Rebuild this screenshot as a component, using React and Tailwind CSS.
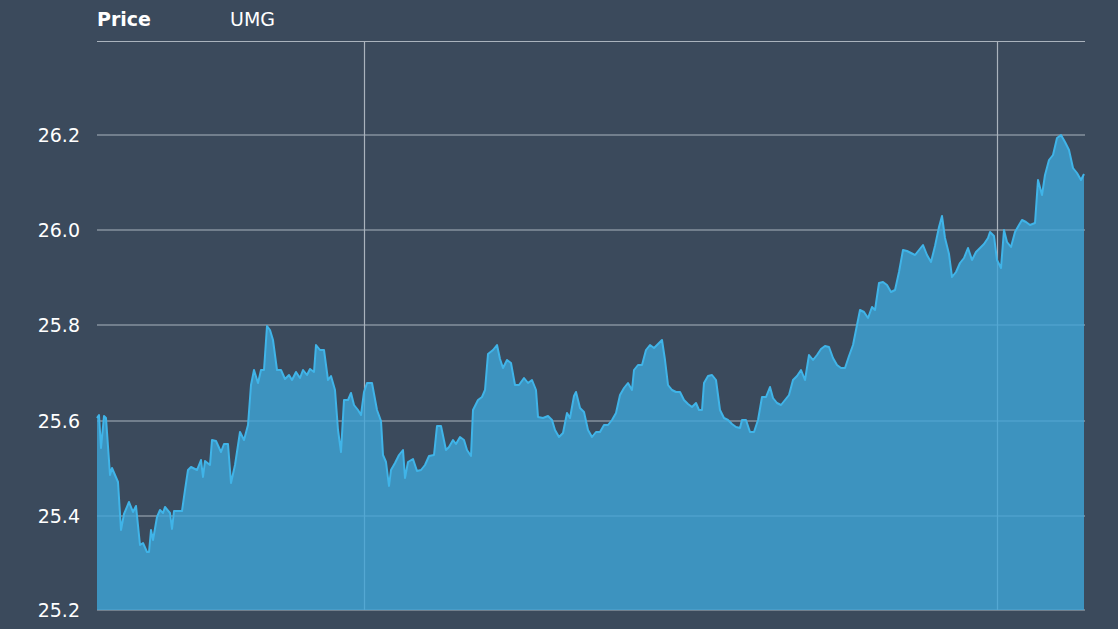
const pts = [[97,418],[99,415],[101,448],[104,416],[106,418],[110,475],[112,468],[118,482],[121,530],[124,514],[129,502],[133,512],[136,506],[140,545],[143,543],[147,552],[149,552],[151,530],[153,540],[157,517],[160,510],[163,513],[165,507],[170,513],[172,529],[174,511],[182,511],[185,490],[188,470],[191,467],[197,470],[201,460],[203,477],[205,461],[210,465],[212,440],[216,441],[221,452],[224,444],[228,444],[231,483],[235,465],[240,432],[244,440],[248,425],[251,385],[254,370],[258,383],[261,370],[264,370],[267,326],[270,330],[273,340],[277,370],[281,370],[285,379],[289,375],[292,380],[296,372],[300,378],[303,370],[307,375],[310,369],[314,372],[316,345],[320,350],[324,350],[328,380],[331,376],[335,390],[338,430],[341,452],[344,400],[348,400],[351,393],[354,405],[358,410],[361,415],[364,392],[367,383],[372,383],[377,410],[381,421],[383,455],[386,462],[389,486],[391,470],[395,463],[399,455],[403,450],[405,478],[408,462],[413,459],[417,471],[421,470],[425,465],[429,456],[434,455],[437,426],[441,426],[446,450],[449,447],[453,440],[456,444],[460,437],[464,440],[467,450],[471,456],[473,410],[478,400],[482,397],[485,390],[488,354],[493,350],[497,345],[500,359],[503,368],[507,360],[511,363],[515,385],[519,385],[524,378],[528,383],[532,380],[536,390],[538,417],[543,418],[548,416],[552,420],[555,430],[559,437],[563,433],[567,413],[570,418],[574,396],[576,392],[580,408],[584,412],[588,430],[592,437],[596,432],[600,432],[604,425],[608,425],[612,420],[616,413],[620,395],[624,388],[628,383],[632,390],[634,370],[638,365],[642,365],[646,350],[650,345],[654,348],[658,344],[662,340],[665,360],[668,385],[672,390],[676,392],[680,392],[684,400],[688,404],[692,407],[696,403],[699,410],[702,410],[704,383],[708,376],[712,375],[716,380],[720,410],[724,418],[728,420],[732,424],[736,427],[740,428],[742,420],[746,420],[750,432],[754,432],[758,420],[762,397],[766,397],[770,387],[773,398],[777,403],[781,405],[785,400],[789,395],[793,380],[797,376],[801,370],[805,380],[809,355],[813,360],[817,355],[821,349],[825,346],[829,347],[833,358],[837,365],[841,368],[845,368],[849,356],[853,345],[857,325],[860,310],[864,312],[868,318],[872,307],[875,310],[879,283],[883,282],[887,285],[891,292],[895,290],[899,272],[903,250],[907,251],[911,253],[915,255],[919,250],[923,245],[927,255],[931,262],[935,246],[939,227],[942,216],[945,238],[949,254],[952,277],[956,272],[960,263],[964,258],[968,248],[972,260],[976,252],[980,248],[984,244],[988,238],[990,232],[994,236],[997,260],[1001,268],[1004,230],[1007,242],[1011,247],[1015,232],[1019,225],[1022,220],[1026,222],[1030,225],[1035,223],[1038,180],[1042,195],[1045,175],[1049,160],[1053,155],[1057,138],[1061,135],[1065,142],[1069,150],[1073,168],[1077,173],[1081,180],[1084,174]];

const OY = 41;
const line = pts.map(([x, y], i) => `${i ? "L" : "M"}${x},${y - OY}`).join(" ");
const area = `${line} L1084,${610 - OY} L97,${610 - OY} Z`;
const grid = [[135, "26.2"], [230, "26.0"], [325, "25.8"], [421, "25.6"], [516, "25.4"], [610, "25.2"]];

export default function App() {
  return (
    <div className="w-[1118px] h-[629px] bg-[#3b4a5c] flex flex-col overflow-hidden" style={{ fontFamily: '"DejaVu Sans", sans-serif' }}>
      <div className="h-[41px] flex items-start pt-[5px] pl-[97px] text-white text-[19px]">
        <span className="font-bold w-[133px]">Price</span>
        <span>UMG</span>
      </div>
      <svg width="1118" height="588" className="block">
        <line x1="97" x2="1085" y1="0.5" y2="0.5" stroke="#aab3bd" strokeWidth="1.2" />
        {grid.map(([y, l]) => (
          <g key={l}>
            <line x1="97" x2="1085" y1={y - OY} y2={y - OY} stroke="#aab3bd" strokeWidth="1.2" />
            <text x="80" y={y - OY + 7} textAnchor="end" fill="#ffffff" fontSize="19">{l}</text>
          </g>
        ))}
        <line x1="364.5" x2="364.5" y1="0" y2="569" stroke="#aab3bd" strokeWidth="1.2" />
        <line x1="997.5" x2="997.5" y1="0" y2="569" stroke="#aab3bd" strokeWidth="1.2" />
        <path d={area} fill="#3fa5d8" fillOpacity="0.8" />
        <path d={line} fill="none" stroke="#40b4e8" strokeWidth="2" strokeLinejoin="round" />
      </svg>
    </div>
  );
}
